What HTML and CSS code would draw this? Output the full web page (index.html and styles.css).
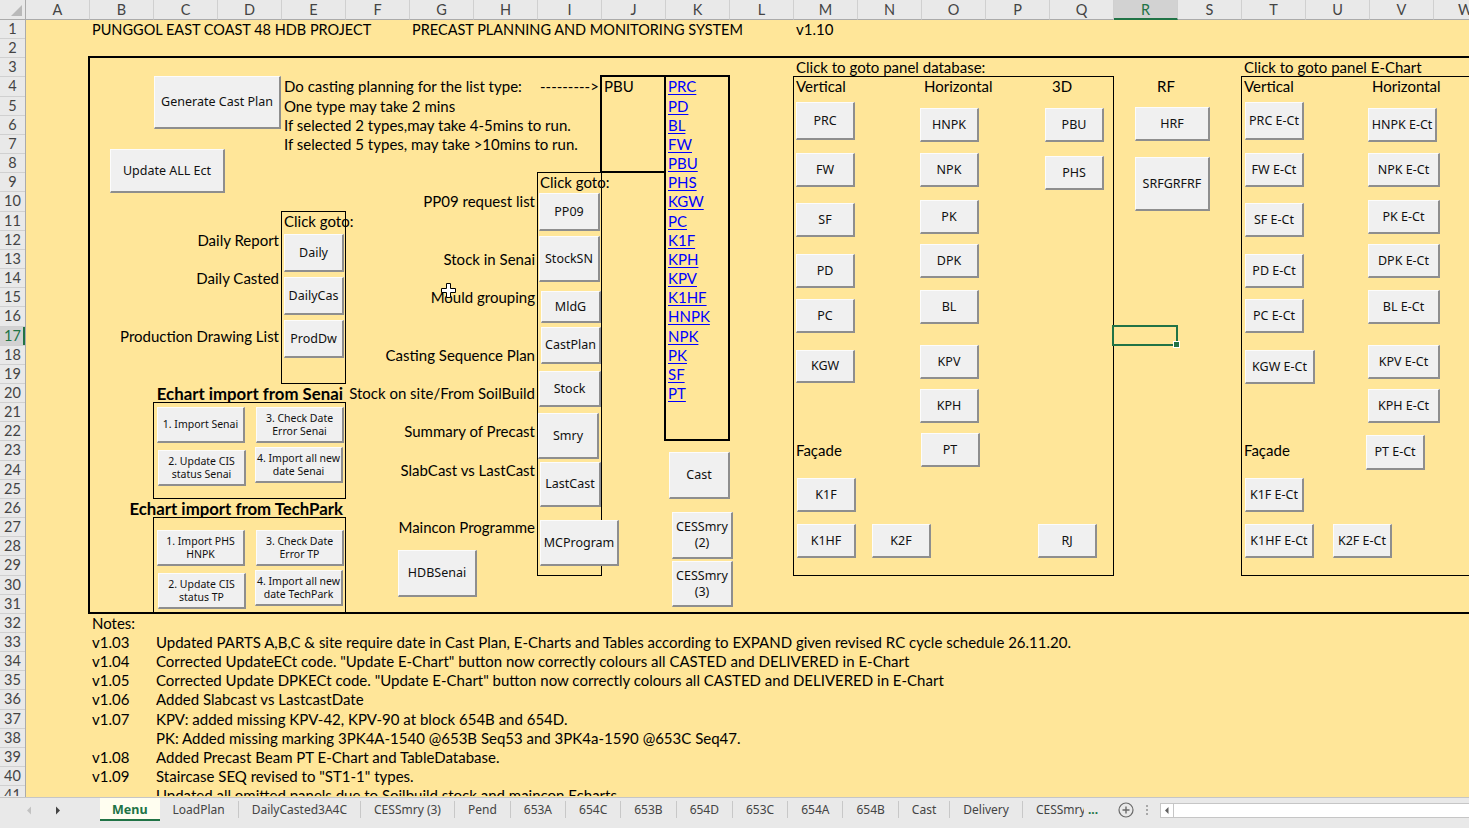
FILE: index.html
```html
<!DOCTYPE html>
<html>
<head>
<meta charset="utf-8">
<title>Menu</title>
<link rel="stylesheet" href="styles.css">
</head>
<body>
<div class="app">
  <div class="colhead">
    <div class="corner"><span class="tri"></span></div>
    <div class="ch">A</div><div class="ch">B</div><div class="ch">C</div><div class="ch">D</div><div class="ch">E</div><div class="ch">F</div><div class="ch">G</div><div class="ch">H</div><div class="ch">I</div><div class="ch">J</div><div class="ch">K</div><div class="ch">L</div><div class="ch">M</div><div class="ch">N</div><div class="ch">O</div><div class="ch">P</div><div class="ch">Q</div><div class="ch sel">R</div><div class="ch">S</div><div class="ch">T</div><div class="ch">U</div><div class="ch">V</div><div class="ch">W</div>
  </div>
  <div class="main">
    <div class="rowhead">
      <div class="rh">1</div><div class="rh">2</div><div class="rh">3</div><div class="rh">4</div><div class="rh">5</div><div class="rh">6</div><div class="rh">7</div><div class="rh">8</div><div class="rh">9</div><div class="rh">10</div><div class="rh">11</div><div class="rh">12</div><div class="rh">13</div><div class="rh">14</div><div class="rh">15</div><div class="rh">16</div><div class="rh sel">17</div><div class="rh">18</div><div class="rh">19</div><div class="rh">20</div><div class="rh">21</div><div class="rh">22</div><div class="rh">23</div><div class="rh">24</div><div class="rh">25</div><div class="rh">26</div><div class="rh">27</div><div class="rh">28</div><div class="rh">29</div><div class="rh">30</div><div class="rh">31</div><div class="rh">32</div><div class="rh">33</div><div class="rh">34</div><div class="rh">35</div><div class="rh">36</div><div class="rh">37</div><div class="rh">38</div><div class="rh">39</div><div class="rh">40</div><div class="rh cut">41</div>
    </div>
    <div class="sheet">
      <!-- cell borders -->
      <div class="box thick bx-main"></div>
      <div class="box thick bx-j"></div>
      <div class="box thick bx-k"></div>
      <div class="box bx-i"></div>
      <div class="box bx-e"></div>
      <div class="box bx-senai"></div>
      <div class="box bx-tp"></div>
      <div class="box bx-db"></div>
      <div class="box bx-ec"></div>
      <div class="selcell"><span class="handle"></span></div>

      <!-- cell text -->
      <div class="t hdr r1 c2">PUNGGOL EAST COAST 48 HDB PROJECT</div>
      <div class="t hdr r1 c7">PRECAST PLANNING AND MONITORING SYSTEM</div>
      <div class="t r1 c13">v1.10</div>
      <div class="t r3 c13">Click to goto panel database:</div>
      <div class="t r3 c20">Click to goto panel E-Chart</div>
      <div class="t r4 c5">Do casting planning for the list type:</div>
      <div class="t r4 c9">---------&gt;</div>
      <div class="t r4 c10">PBU</div>
      <div class="t r4 c13">Vertical</div>
      <div class="t r4 c15">Horizontal</div>
      <div class="t r4 c17">3D</div>
      <div class="t r4 c18 ra">RF</div>
      <div class="t r4 c20">Vertical</div>
      <div class="t r4 c22">Horizontal</div>
      <div class="t r5 c5">One type may take 2 mins</div>
      <div class="t r6 c5">If selected 2 types,may take 4-5mins to run.</div>
      <div class="t r7 c5">If selected 5 types, may take &gt;10mins to run.</div>
      <div class="t r9 c9">Click goto:</div>
      <div class="t r10 to9 ra">PP09 request list</div>
      <div class="t r11 c5">Click goto:</div>
      <div class="t r12 to5 ra">Daily Report</div>
      <div class="t r13 to9 ra">Stock in Senai</div>
      <div class="t r14 to5 ra">Daily Casted</div>
      <div class="t r15 to9 ra">Mould grouping</div>
      <div class="t r17 to5 ra">Production Drawing List</div>
      <div class="t r18 to9 ra">Casting Sequence Plan</div>
      <div class="t r20 to6 ra bold">Echart import from Senai</div>
      <div class="t r20 to9 ra">Stock on site/From SoilBuild</div>
      <div class="t r22 to9 ra">Summary of Precast</div>
      <div class="t r23 c13">Façade</div>
      <div class="t r23 c20">Façade</div>
      <div class="t r24 to9 ra">SlabCast vs LastCast</div>
      <div class="t r26 to6 ra bold">Echart import from TechPark</div>
      <div class="t r27 to9 ra">Maincon Programme</div>

      <a class="t lk r4 c11">PRC</a>
      <a class="t lk r5 c11">PD</a>
      <a class="t lk r6 c11">BL</a>
      <a class="t lk r7 c11">FW</a>
      <a class="t lk r8 c11">PBU</a>
      <a class="t lk r9 c11">PHS</a>
      <a class="t lk r10 c11">KGW</a>
      <a class="t lk r11 c11">PC</a>
      <a class="t lk r12 c11">K1F</a>
      <a class="t lk r13 c11">KPH</a>
      <a class="t lk r14 c11">KPV</a>
      <a class="t lk r15 c11">K1HF</a>
      <a class="t lk r16 c11">HNPK</a>
      <a class="t lk r17 c11">NPK</a>
      <a class="t lk r18 c11">PK</a>
      <a class="t lk r19 c11">SF</a>
      <a class="t lk r20 c11">PT</a>

      <div class="t r32 c2">Notes:</div>
      <div class="t r33 c2">v1.03</div>
      <div class="t r33 c3">Updated PARTS A,B,C &amp; site require date in Cast Plan, E-Charts and Tables according to EXPAND given revised RC cycle schedule 26.11.20.</div>
      <div class="t r34 c2">v1.04</div>
      <div class="t r34 c3">Corrected UpdateECt code. "Update E-Chart" button now correctly colours all CASTED and DELIVERED in E-Chart</div>
      <div class="t r35 c2">v1.05</div>
      <div class="t r35 c3">Corrected Update DPKECt code. "Update E-Chart" button now correctly colours all CASTED and DELIVERED in E-Chart</div>
      <div class="t r36 c2">v1.06</div>
      <div class="t r36 c3">Added Slabcast vs LastcastDate</div>
      <div class="t r37 c2">v1.07</div>
      <div class="t r37 c3">KPV: added missing KPV-42, KPV-90 at block 654B and 654D.</div>
      <div class="t r38 c3">PK: Added missing marking 3PK4A-1540 @653B Seq53 and 3PK4a-1590 @653C Seq47.</div>
      <div class="t r39 c2">v1.08</div>
      <div class="t r39 c3">Added Precast Beam PT E-Chart and TableDatabase.</div>
      <div class="t r40 c2">v1.09</div>
      <div class="t r40 c3">Staircase SEQ revised to "ST1-1" types.</div>
      <div class="t r41 tail cut">Updated all omitted panels due to Soilbuild stock and maincon Echarts</div>
    </div>
  </div>

  <!-- floating form buttons -->
  <div class="shapes">
    <div class="btn b-gen">Generate Cast Plan</div>
    <div class="btn b-upd">Update ALL Ect</div>
    <div class="btn b-daily">Daily</div>
    <div class="btn b-dcas">DailyCas</div>
    <div class="btn b-prod">ProdDw</div>
    <div class="btn b-pp09">PP09</div>
    <div class="btn b-stsn">StockSN</div>
    <div class="btn b-mldg">MldG</div>
    <div class="btn b-cplan">CastPlan</div>
    <div class="btn b-stock">Stock</div>
    <div class="btn b-smry">Smry</div>
    <div class="btn b-lcast">LastCast</div>
    <div class="btn b-mcp">MCProgram</div>
    <div class="btn b-hdb">HDBSenai</div>
    <div class="btn b-cast">Cast</div>
    <div class="btn b-ces2">CESSmry<br>(2)</div>
    <div class="btn b-ces3">CESSmry<br>(3)</div>

    <div class="btn sm b-s1">1. Import Senai</div>
    <div class="btn sm b-s3">3. Check Date<br>Error Senai</div>
    <div class="btn sm b-s2">2. Update CIS<br>status Senai</div>
    <div class="btn sm b-s4">4. Import all new<br>date Senai</div>
    <div class="btn sm b-t1">1. Import PHS<br>HNPK</div>
    <div class="btn sm b-t3">3. Check Date<br>Error TP</div>
    <div class="btn sm b-t2">2. Update CIS<br>status TP</div>
    <div class="btn sm b-t4">4. Import all new<br>date TechPark</div>

    <div class="btn b-prc">PRC</div>
    <div class="btn b-fw">FW</div>
    <div class="btn b-sf">SF</div>
    <div class="btn b-pd">PD</div>
    <div class="btn b-pc">PC</div>
    <div class="btn b-kgw">KGW</div>
    <div class="btn b-k1f">K1F</div>
    <div class="btn b-k1hf">K1HF</div>
    <div class="btn b-k2f">K2F</div>
    <div class="btn b-rj">RJ</div>
    <div class="btn b-hnpk">HNPK</div>
    <div class="btn b-npk">NPK</div>
    <div class="btn b-pk">PK</div>
    <div class="btn b-dpk">DPK</div>
    <div class="btn b-bl">BL</div>
    <div class="btn b-kpv">KPV</div>
    <div class="btn b-kph">KPH</div>
    <div class="btn b-pt">PT</div>
    <div class="btn b-pbu">PBU</div>
    <div class="btn b-phs">PHS</div>
    <div class="btn b-hrf">HRF</div>
    <div class="btn b-srf">SRFGRFRF</div>

    <div class="btn b-eprc">PRC E-Ct</div>
    <div class="btn b-efw">FW E-Ct</div>
    <div class="btn b-esf">SF E-Ct</div>
    <div class="btn b-epd">PD E-Ct</div>
    <div class="btn b-epc">PC E-Ct</div>
    <div class="btn b-ekgw">KGW E-Ct</div>
    <div class="btn b-ek1f">K1F E-Ct</div>
    <div class="btn b-ek1hf">K1HF E-Ct</div>
    <div class="btn b-ek2f">K2F E-Ct</div>
    <div class="btn b-ehnpk">HNPK E-Ct</div>
    <div class="btn b-enpk">NPK E-Ct</div>
    <div class="btn b-epk">PK E-Ct</div>
    <div class="btn b-edpk">DPK E-Ct</div>
    <div class="btn b-ebl">BL E-Ct</div>
    <div class="btn b-ekpv">KPV E-Ct</div>
    <div class="btn b-ekph">KPH E-Ct</div>
    <div class="btn b-ept">PT E-Ct</div>

    <svg class="cursor" width="16" height="16" viewBox="0 0 16 16"><path d="M5.5 0.5h4v5h5v4h-5v5h-4v-5h-5v-4h5z" fill="#fff" stroke="#000" stroke-width="1"/></svg>
  </div>

  <div class="tabbar">
    <div class="nav">
      <svg width="6" height="9" viewBox="0 0 6 9"><path d="M5 0.5L1 4.5L5 8.5z" fill="#c2c2c2"/></svg>
      <svg width="6" height="9" viewBox="0 0 6 9"><path d="M1 0.5L5 4.5L1 8.5z" fill="#444"/></svg>
    </div>
    <div class="tabs">
      <div class="tab active">Menu</div>
      <div class="tab">LoadPlan</div>
      <div class="tab">DailyCasted3A4C</div>
      <div class="tab">CESSmry (3)</div>
      <div class="tab">Pend</div>
      <div class="tab">653A</div>
      <div class="tab">654C</div>
      <div class="tab">653B</div>
      <div class="tab">654D</div>
      <div class="tab">653C</div>
      <div class="tab">654A</div>
      <div class="tab">654B</div>
      <div class="tab">Cast</div>
      <div class="tab">Delivery</div>
      <div class="tab last"><span class="clip">CESSmry</span><span class="more">...</span></div>
    </div>
    <div class="addsheet">
      <svg width="16" height="16" viewBox="0 0 16 16"><circle cx="8" cy="8" r="7" fill="none" stroke="#6a6a6a" stroke-width="1.2"/><path d="M8 4.5v7M4.5 8h7" stroke="#6a6a6a" stroke-width="1.4"/></svg>
    </div>
    <div class="vdots"><span></span><span></span><span></span></div>
    <div class="hscroll">
      <div class="sarrow"><svg width="4" height="7" viewBox="0 0 4 7"><path d="M3.5 0L0 3.5L3.5 7z" fill="#606060"/></svg></div>
    </div>
  </div>
</div>
</body>
</html>
```

FILE: styles.css
```css
html, body { margin: 0; padding: 0; }
body { background: #fff; font-family: "Lato", "Liberation Sans", sans-serif; }

.app { position: relative; width: 1469px; height: 828px; overflow: hidden; background: #e9e9e9; }

/* column header */
.colhead { display: flex; height: 20px; }
.corner { position: relative; flex: 0 0 26px; box-sizing: border-box; height: 20px; background: #e9e9e9; border-right: 1px solid #ababab; border-bottom: 1px solid #ababab; }
.corner .tri { position: absolute; right: 3px; bottom: 3px; width: 0; height: 0; border-left: 11px solid transparent; border-bottom: 11px solid #b9b9b9; }
.ch { flex: 0 0 64px; box-sizing: border-box; height: 20px; border-right: 1px solid #d0d0d0; border-bottom: 1px solid #ababab; background: #e9e9e9; color: #444; font-size: 14.5px; line-height: 19px; text-align: center; }
.ch.sel { background: #d2d2d2; color: #217346; border-bottom: 2px solid #217346; }

/* body */
.main { display: flex; height: 777px; overflow: hidden; }
.rowhead { flex: 0 0 26px; box-sizing: border-box; border-right: 1px solid #ababab; background: #e9e9e9; }
.rh { box-sizing: border-box; height: 19.17px; border-bottom: 1px solid #d0d0d0; color: #444; font-size: 14.5px; line-height: 18px; text-align: center; }
.rh.sel { background: #d2d2d2; color: #217346; box-shadow: inset -2px 0 0 #217346; }
.rh.cut { height: 10px; overflow: hidden; border-bottom: none; }

.sheet { position: relative; flex: 0 0 auto; display: grid; grid-template-columns: repeat(23, 64px); grid-template-rows: repeat(41, 19.17px); background: #ffe699; width: 1472px; }

/* cell text */
.t { white-space: nowrap; font-size: 15px; line-height: 19.17px; padding: 0 3px 0 2px; color: #000; min-width: 0; overflow: visible; }
.t.hdr { font-size: 14.5px; }
.t.tail { grid-column: 3 / 24; }
.t.cut { height: 10px; overflow: hidden; }
.ra { text-align: right; }
.bold { font-weight: 700; font-size: 16.8px; }
.lk { color: #0000ff; text-decoration: underline; text-underline-offset: 2px; }

.r1{grid-row:1}.r3{grid-row:3}.r4{grid-row:4}.r5{grid-row:5}.r6{grid-row:6}.r7{grid-row:7}.r8{grid-row:8}.r9{grid-row:9}.r10{grid-row:10}
.r11{grid-row:11}.r12{grid-row:12}.r13{grid-row:13}.r14{grid-row:14}.r15{grid-row:15}.r16{grid-row:16}.r17{grid-row:17}.r18{grid-row:18}.r19{grid-row:19}.r20{grid-row:20}
.r22{grid-row:22}.r23{grid-row:23}.r24{grid-row:24}.r26{grid-row:26}.r27{grid-row:27}
.r32{grid-row:32}.r33{grid-row:33}.r34{grid-row:34}.r35{grid-row:35}.r36{grid-row:36}.r37{grid-row:37}.r38{grid-row:38}.r39{grid-row:39}.r40{grid-row:40}.r41{grid-row:41}

.c2{grid-column:2}.c3{grid-column:3}.c5{grid-column:5}.c7{grid-column:7}.c9{grid-column:9}.c10{grid-column:10}.c11{grid-column:11}
.c13{grid-column:13}.c15{grid-column:15}.c17{grid-column:17}.c18{grid-column:18}.c20{grid-column:20}.c22{grid-column:22}
.to5{grid-column:1 / 5}.to6{grid-column:1 / 6}.to9{grid-column:1 / 9}

/* cell borders */
.box { border: 1px solid #000; margin: -1px 0 0 -1px; }
.box.thick { border-width: 2px; margin: -2px 0 0 -2px; }
.bx-main { grid-column: 2 / 24; grid-row: 3 / 32; border-right: none; }
.bx-j { grid-column: 10 / 11; grid-row: 4 / 9; }
.bx-k { grid-column: 11 / 12; grid-row: 4 / 23; }
.bx-i { grid-column: 9 / 10; grid-row: 9 / 30; }
.bx-e { grid-column: 5 / 6; grid-row: 11 / 20; }
.bx-senai { grid-column: 3 / 6; grid-row: 21 / 26; }
.bx-tp { grid-column: 3 / 6; grid-row: 27 / 32; }
.bx-db { grid-column: 13 / 18; grid-row: 4 / 30; }
.bx-ec { grid-column: 20 / 24; grid-row: 4 / 30; border-right: none; }

.selcell { position: relative; grid-column: 18; grid-row: 17; border: 2px solid #217346; margin: -2px 0 0 -2px; }
.selcell .handle { position: absolute; right: -4px; bottom: -4px; width: 5px; height: 5px; background: #217346; border: 1px solid #fff; }

/* floating buttons (Excel form controls) */
.shapes { position: absolute; left: 0; top: 0; width: 1469px; height: 797px; pointer-events: none; }
.btn { position: absolute; box-sizing: border-box; display: flex; align-items: center; justify-content: center; text-align: center;
  background: #f0f0f0; border-style: solid; border-width: 1px 2px 2px 1px; border-color: #fcfcfc #8e8e8e #8e8e8e #fcfcfc;
  font-family: "Noto Sans", "DejaVu Sans", sans-serif; font-size: 12.5px; line-height: 16px; color: #111; white-space: nowrap; }
.btn.sm { font-size: 10.5px; line-height: 13px; }

.b-gen{left:154px;top:76px;width:127px;height:53px}
.b-upd{left:110px;top:149px;width:115px;height:44px}
.b-daily{left:284px;top:234px;width:60px;height:38px}
.b-dcas{left:284px;top:277px;width:60px;height:38px}
.b-prod{left:284px;top:320px;width:60px;height:38px}
.b-pp09{left:539px;top:193px;width:61px;height:38px}
.b-stsn{left:539px;top:236px;width:61px;height:46px}
.b-mldg{left:541px;top:291px;width:60px;height:32px}
.b-cplan{left:541px;top:327px;width:60px;height:37px}
.b-stock{left:539px;top:371px;width:62px;height:36px}
.b-smry{left:538px;top:413px;width:61px;height:46px}
.b-lcast{left:540px;top:462px;width:61px;height:45px}
.b-mcp{left:540px;top:520px;width:79px;height:46px}
.b-hdb{left:398px;top:550px;width:79px;height:47px}
.b-cast{left:669px;top:452px;width:61px;height:47px}
.b-ces2{left:672px;top:512px;width:61px;height:47px}
.b-ces3{left:672px;top:561px;width:61px;height:46px}

.b-s1{left:157px;top:407px;width:88px;height:36px}
.b-s3{left:256px;top:407px;width:88px;height:36px}
.b-s2{left:158px;top:450px;width:88px;height:36px}
.b-s4{left:255px;top:447px;width:88px;height:36px}
.b-t1{left:157px;top:530px;width:88px;height:36px}
.b-t3{left:256px;top:530px;width:88px;height:36px}
.b-t2{left:158px;top:573px;width:88px;height:36px}
.b-t4{left:255px;top:570px;width:88px;height:36px}

.b-prc{left:796px;top:102px;width:59px;height:38px}
.b-fw{left:796px;top:153px;width:59px;height:34px}
.b-sf{left:796px;top:203px;width:59px;height:34px}
.b-pd{left:796px;top:254px;width:59px;height:34px}
.b-pc{left:796px;top:299px;width:59px;height:34px}
.b-kgw{left:796px;top:350px;width:59px;height:33px}
.b-k1f{left:797px;top:478px;width:59px;height:34px}
.b-k1hf{left:797px;top:524px;width:59px;height:34px}
.b-k2f{left:872px;top:524px;width:59px;height:34px}
.b-rj{left:1038px;top:524px;width:59px;height:34px}
.b-hnpk{left:920px;top:108px;width:59px;height:34px}
.b-npk{left:920px;top:153px;width:59px;height:34px}
.b-pk{left:920px;top:200px;width:59px;height:34px}
.b-dpk{left:920px;top:244px;width:59px;height:34px}
.b-bl{left:920px;top:290px;width:59px;height:34px}
.b-kpv{left:920px;top:345px;width:59px;height:34px}
.b-kph{left:920px;top:389px;width:59px;height:34px}
.b-pt{left:921px;top:433px;width:59px;height:34px}
.b-pbu{left:1045px;top:108px;width:59px;height:34px}
.b-phs{left:1045px;top:156px;width:59px;height:34px}
.b-hrf{left:1135px;top:107px;width:75px;height:34px}
.b-srf{left:1135px;top:157px;width:75px;height:54px}

.b-eprc{left:1245px;top:102px;width:59px;height:38px}
.b-efw{left:1245px;top:153px;width:59px;height:34px}
.b-esf{left:1245px;top:203px;width:59px;height:34px}
.b-epd{left:1245px;top:254px;width:59px;height:34px}
.b-epc{left:1245px;top:299px;width:59px;height:34px}
.b-ekgw{left:1245px;top:350px;width:70px;height:34px}
.b-ek1f{left:1245px;top:478px;width:59px;height:34px}
.b-ek1hf{left:1245px;top:524px;width:69px;height:34px}
.b-ek2f{left:1333px;top:524px;width:59px;height:34px}
.b-ehnpk{left:1368px;top:108px;width:69px;height:34px}
.b-enpk{left:1368px;top:153px;width:72px;height:34px}
.b-epk{left:1368px;top:200px;width:72px;height:34px}
.b-edpk{left:1368px;top:244px;width:72px;height:34px}
.b-ebl{left:1368px;top:290px;width:72px;height:34px}
.b-ekpv{left:1368px;top:345px;width:72px;height:34px}
.b-ekph{left:1368px;top:389px;width:72px;height:34px}
.b-ept{left:1366px;top:435px;width:59px;height:35px}

.cursor { position: absolute; left: 441px; top: 283px; }

/* sheet tabs */
.tabbar { display: flex; align-items: stretch; height: 31px; box-sizing: border-box; border-top: 1px solid #c6c6c6; background: #e9e9e9; font-family: "Noto Sans", "DejaVu Sans", sans-serif; }
.nav { flex: 0 0 100px; display: flex; align-items: center; gap: 23px; padding-left: 26px; box-sizing: border-box; height: 24px; }
.tabs { display: flex; height: 24px; }
.tab { display: flex; align-items: center; padding: 0 13px; font-size: 12px; line-height: 15px; color: #444; border-right: 1px solid #c8c8c8; height: 17px; margin-top: 3px; }
.tab.active { background: #fffef0; color: #217346; font-weight: 700; font-size: 12.5px; height: 23px; margin-top: 0; padding: 0 12px; border-right: none; box-shadow: inset 0 -2px 0 #217346; }
.tab.last { border-right: none; padding-right: 6px; }
.tab .clip { display: inline-block; width: 48px; overflow: hidden; }
.tab .more { color: #217346; font-weight: 700; margin-left: 4px; }
.addsheet { display: flex; align-items: center; height: 24px; padding: 0 8px 0 14px; }
.vdots { display: flex; flex-direction: column; justify-content: center; gap: 2px; height: 24px; padding: 0 12px 0 4px; }
.vdots span { width: 2px; height: 2px; background: #a8a8a8; }
.hscroll { flex: 1; margin-top: 5px; height: 15px; box-sizing: border-box; background: #fff; border: 1px solid #c6c6c6; border-right: none; }
.sarrow { width: 12px; height: 13px; display: flex; align-items: center; justify-content: center; border-right: 1px solid #c6c6c6; }
```
